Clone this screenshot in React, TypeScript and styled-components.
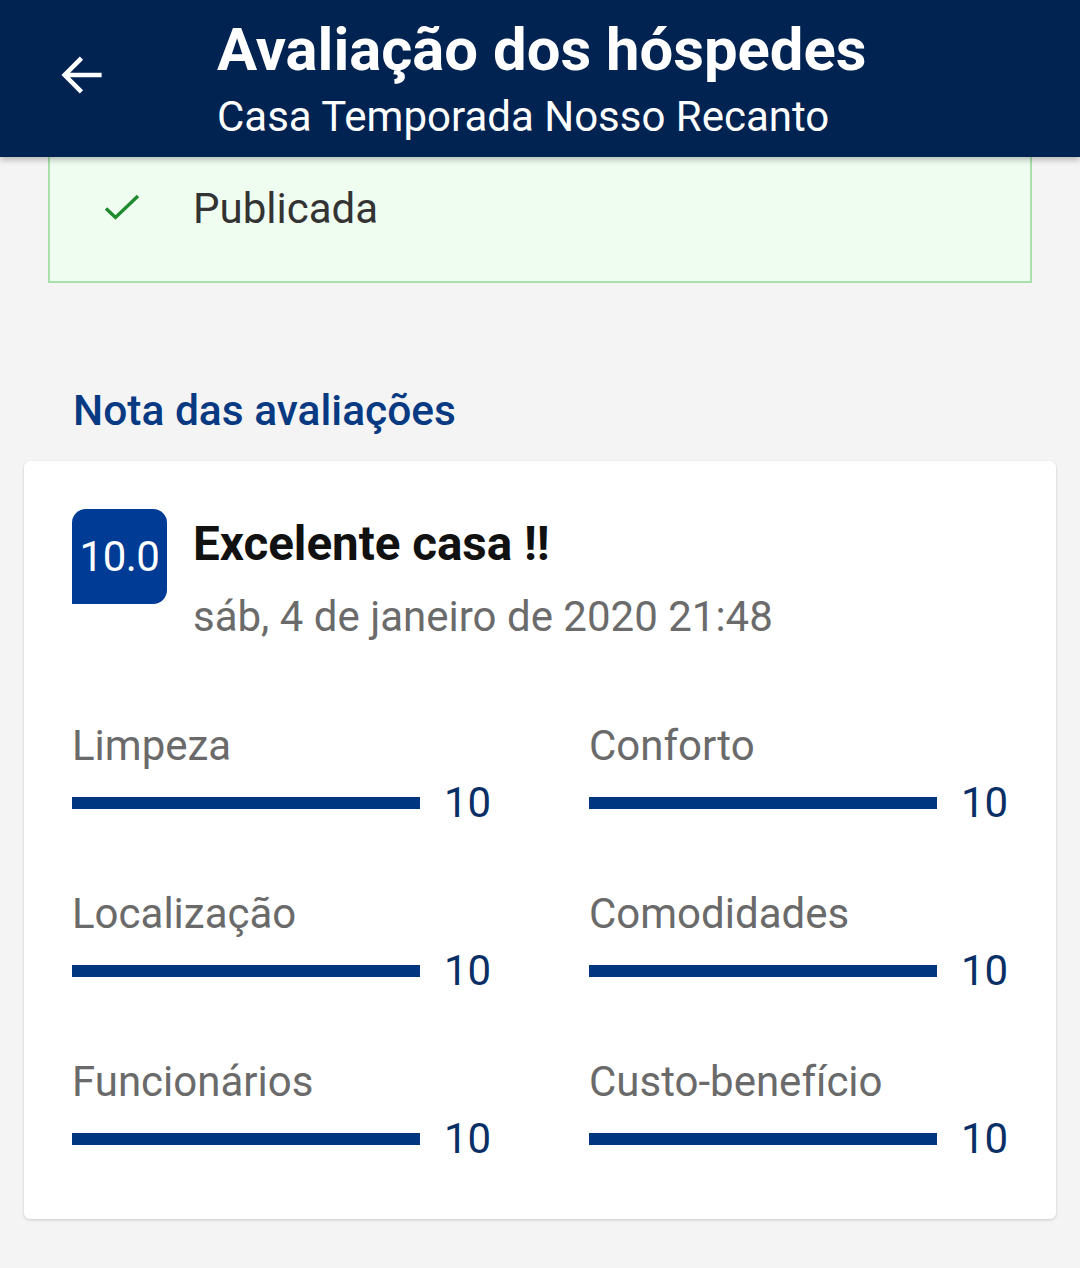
import React from "react";
import styled, { createGlobalStyle } from "styled-components";

const GlobalStyle = createGlobalStyle`
  html, body {
    margin: 0;
    padding: 0;
    background: #f4f4f4;
    font-family: Roboto, "Noto Sans", "Liberation Sans", sans-serif;
  }
`;

const Page = styled.div`
  width: 1080px;
  min-height: 1268px;
  background: #f4f4f4;
  overflow: hidden;
`;

const TopBar = styled.header`
  position: relative;
  z-index: 2;
  height: 157px;
  background: #012352;
  display: flex;
  align-items: center;
  box-shadow: 0 3px 6px rgba(0, 0, 0, 0.25);
`;

const BackButton = styled.button`
  flex: none;
  width: 217px;
  height: 100%;
  padding: 0 0 8px 56px;
  border: none;
  background: transparent;
  display: flex;
  align-items: center;
  cursor: pointer;
`;

const TitleBlock = styled.div`
  align-self: flex-start;
  padding-top: 19px;
  display: flex;
  flex-direction: column;
  color: #fff;
  white-space: nowrap;
`;

const Title = styled.h1`
  margin: 0;
  font-size: 59.8px;
  font-weight: 700;
  line-height: 62px;
`;

const Subtitle = styled.div`
  font-size: 42px;
  line-height: 48px;
  margin-top: 12px;
`;

const StatusBox = styled.div`
  margin: 0 48px;
  height: 126px;
  background: #effdf0;
  border: 2px solid #a9dfab;
  border-top: none;
  display: flex;
  align-items: flex-start;
  padding-top: 28px;
  box-sizing: border-box;
`;

const CheckWrap = styled.span`
  width: 143px;
  display: flex;
  justify-content: center;
  margin-top: 9px;
`;

const StatusText = styled.span`
  font-size: 42px;
  line-height: 48px;
  color: #333;
`;

const SectionTitle = styled.h2`
  margin: 105px 0 27px 73px;
  font-size: 42.5px;
  line-height: 46px;
  font-weight: 500;
  color: #073a82;
`;

const Card = styled.section`
  margin: 0 24px;
  background: #fff;
  border-radius: 6px;
  box-shadow: 0 1px 3px rgba(0, 0, 0, 0.18);
  padding: 48px 48px 56px;
`;

const ReviewHead = styled.div`
  display: flex;
  gap: 26px;
`;

const ScoreBadge = styled.div`
  flex: none;
  width: 95px;
  height: 95px;
  background: #003b95;
  color: #fff;
  border-radius: 14px 14px 14px 0;
  display: flex;
  align-items: center;
  justify-content: center;
  font-size: 42px;
  letter-spacing: -0.5px;
`;

const HeadText = styled.div`
  display: flex;
  flex-direction: column;
  margin-top: 9px;
  white-space: nowrap;
`;

const ReviewTitle = styled.div`
  font-size: 47.5px;
  line-height: 52px;
  font-weight: 700;
  color: #111;
`;

const ReviewDate = styled.div`
  margin-top: 23px;
  font-size: 42px;
  line-height: 48px;
  color: #6b6b6b;
`;

const ScoreGrid = styled.div`
  margin-top: 81px;
  display: grid;
  grid-template-columns: 517px 1fr;
  row-gap: 63px;
`;

const ScoreItem = styled.div`
  display: flex;
  flex-direction: column;
  gap: 9px;
`;

const ScoreLabel = styled.div`
  font-size: 42px;
  line-height: 48px;
  color: #6a6a6a;
`;

const BarRow = styled.div`
  display: flex;
  align-items: center;
  gap: 24px;
`;

const BarTrack = styled.div`
  width: 348px;
  height: 12px;
  background: #e6e6e6;
`;

const BarFill = styled.div`
  height: 100%;
  background: #003580;
`;

const ScoreValue = styled.span`
  font-size: 42px;
  line-height: 48px;
  color: #0a2f66;
`;

const scores = [
  { label: "Limpeza", value: 10 },
  { label: "Conforto", value: 10 },
  { label: "Localização", value: 10 },
  { label: "Comodidades", value: 10 },
  { label: "Funcionários", value: 10 },
  { label: "Custo-benefício", value: 10 },
];

export default function App() {
  return (
    <Page>
      <GlobalStyle />
      <TopBar>
        <BackButton aria-label="Voltar">
          <svg width="52" height="52" viewBox="0 0 24 24" fill="none">
            <path
              d="M20 12H4.5M11 5l-7 7 7 7"
              stroke="#fff"
              strokeWidth="2.1"
              strokeLinecap="square"
            />
          </svg>
        </BackButton>
        <TitleBlock>
          <Title>Avaliação dos hóspedes</Title>
          <Subtitle>Casa Temporada Nosso Recanto</Subtitle>
        </TitleBlock>
      </TopBar>

      <StatusBox>
        <CheckWrap>
          <svg width="36" height="28" viewBox="0 0 36 28" fill="none">
            <path d="M2 14.5l9.5 9L34 2" stroke="#1f8a2e" strokeWidth="3.4" />
          </svg>
        </CheckWrap>
        <StatusText>Publicada</StatusText>
      </StatusBox>

      <SectionTitle>Nota das avaliações</SectionTitle>

      <Card>
        <ReviewHead>
          <ScoreBadge>10.0</ScoreBadge>
          <HeadText>
            <ReviewTitle>Excelente casa !!</ReviewTitle>
            <ReviewDate>sáb, 4 de janeiro de 2020 21:48</ReviewDate>
          </HeadText>
        </ReviewHead>

        <ScoreGrid>
          {scores.map((s) => (
            <ScoreItem key={s.label}>
              <ScoreLabel>{s.label}</ScoreLabel>
              <BarRow>
                <BarTrack>
                  <BarFill style={{ width: `${s.value * 10}%` }} />
                </BarTrack>
                <ScoreValue>{s.value}</ScoreValue>
              </BarRow>
            </ScoreItem>
          ))}
        </ScoreGrid>
      </Card>
    </Page>
  );
}
